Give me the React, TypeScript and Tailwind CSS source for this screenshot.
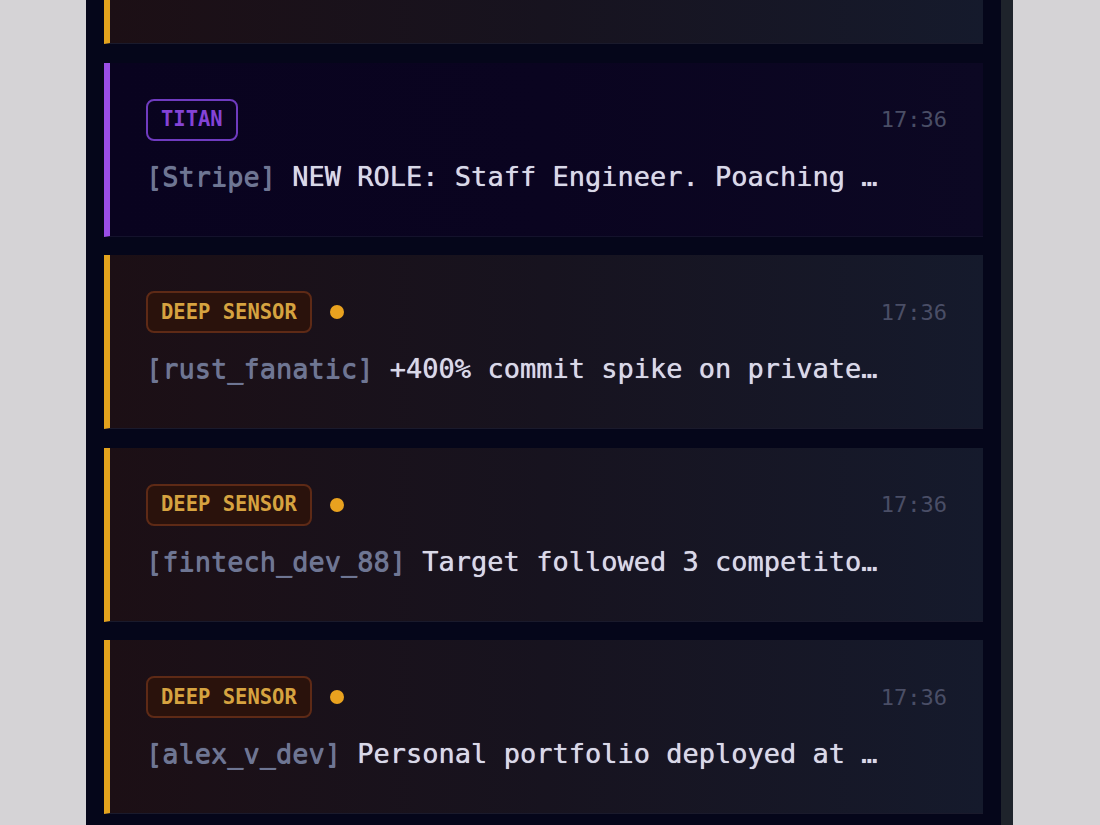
import React from "react";

type Item = {
  kind: "titan" | "deep";
  handle: string;
  msg: string;
  time: string;
};

const items: Item[] = [
  { kind: "deep", handle: "[octo_dev]", msg: "Updated LinkedIn headline to open to work", time: "17:36" },
  { kind: "titan", handle: "[Stripe]", msg: "NEW ROLE: Staff Engineer. Poaching window open now", time: "17:36" },
  { kind: "deep", handle: "[rust_fanatic]", msg: "+400% commit spike on private repositories", time: "17:36" },
  { kind: "deep", handle: "[fintech_dev_88]", msg: "Target followed 3 competitor CTOs this week", time: "17:36" },
  { kind: "deep", handle: "[alex_v_dev]", msg: "Personal portfolio deployed at new custom domain", time: "17:36" },
];

const mono = { fontFamily: '"DejaVu Sans Mono", "Liberation Mono", monospace' };

function Card({ item }: { item: Item }) {
  const titan = item.kind === "titan";
  return (
    <div
      className={
        titan
          ? "shrink-0 border-l-[6px] border-l-[#9a4ee6] border-b border-b-[#14122c] bg-linear-to-r from-[#09031f] via-[#0a0420] to-[#0c0823] pl-9 pr-9 pt-9 pb-[39px]"
          : "shrink-0 border-l-[6px] border-l-[#e3a21d] border-b border-b-[#1a1a2c] bg-linear-to-r from-[#1c0f15] via-[#17131f] to-[#151a2c] pl-9 pr-9 pt-9 pb-[39px]"
      }
    >
      <div className="flex h-[42px] items-center">
        {titan ? (
          <div className="flex h-[42px] items-center rounded-lg border-2 border-[#6f3bbf] px-[13px] text-[20.5px] font-bold text-[#8443d6]">
            TITAN
          </div>
        ) : (
          <>
            <div className="flex h-[42px] items-center rounded-lg border-2 border-[#5e2a16] bg-[#2a120c] px-[13px] text-[20.5px] font-bold text-[#d6a340]">
              DEEP SENSOR
            </div>
            <div className="ml-[18px] h-[14px] w-[14px] rounded-full bg-[#e9a21f]" />
          </>
        )}
        <div className="ml-auto text-[22px] text-[#4a4e66]">{item.time}</div>
      </div>
      <div className="mt-4 flex w-[740px] whitespace-pre text-[27px] leading-[40px] text-[#d9d9e8] [text-shadow:0_0_0.7px_currentColor]">
        <span className="shrink-0 text-[#6e7693] [text-shadow:0_0_1px_currentColor,0_0.5px_0.5px_currentColor]">{item.handle + " "}</span>
        <span className="min-w-0 flex-1 overflow-hidden text-ellipsis">{item.msg}</span>
      </div>
    </div>
  );
}

export default function App() {
  return (
    <div className="flex h-[825px] w-[1100px] overflow-hidden bg-[#d5d3d6]" style={mono}>
      <div className="w-[86px] shrink-0" />
      <div className="h-full w-[915px] shrink-0 overflow-hidden bg-[#05061a] px-[18px]">
        <div className="-mt-[130px] flex flex-col gap-[18.5px]">
          {items.map((it, i) => (
            <Card key={i} item={it} />
          ))}
        </div>
      </div>
      <div className="h-full w-[12px] shrink-0 bg-[#1e232b]" />
      <div className="flex-1" />
    </div>
  );
}
